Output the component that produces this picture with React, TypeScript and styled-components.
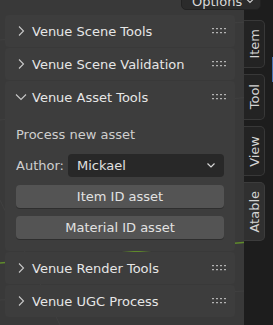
import { createGlobalStyle } from 'styled-components'
import styled from 'styled-components'

const GlobalStyle = createGlobalStyle`
  html, body {
    margin: 0;
    padding: 0;
    background: #393939;
  }
  * {
    box-sizing: border-box;
  }
`

const panels = [
  { title: 'Venue Scene Tools', open: false },
  { title: 'Venue Scene Validation', open: false },
  { title: 'Venue Asset Tools', open: true },
  { title: 'Venue Render Tools', open: false },
  { title: 'Venue UGC Process', open: false },
]

const tabs = [
  { label: 'Item', height: 48, active: false },
  { label: 'Tool', height: 46, active: false },
  { label: 'View', height: 50, active: false },
  { label: 'Atable', height: 59, active: true },
]

const Chevron = ({ open }: { open: boolean }) => (
  <ChevronSvg width="12" height="12" viewBox="0 0 12 12">
    {open ? (
      <path d="M1 3.5 L6 8.5 L11 3.5" fill="none" stroke="#c9c9c9" strokeWidth="1.1" />
    ) : (
      <path d="M4 1.5 L8.5 6 L4 10.5" fill="none" stroke="#c9c9c9" strokeWidth="1.1" />
    )}
  </ChevronSvg>
)

const DragHandle = () => (
  <svg width="14" height="6" viewBox="0 0 14 6">
    {[0, 4, 8, 12].map((x) =>
      [0, 4].map((y) => (
        <g key={`${x}-${y}`}>
          <rect x={x} y={y + 1} width="2" height="1" fill="#1e1e1e" />
          <rect x={x} y={y} width="2" height="1.4" fill="#b4b4b4" />
        </g>
      ))
    )}
  </svg>
)

const App = () => {
  return (
    <>
      <GlobalStyle />
      <Viewport>
        <GridLines width="273" height="325" viewBox="0 0 273 325">
          <path d="M0 40 L273 20" stroke="#404040" strokeWidth="1" />
          <path d="M0 120 L273 95" stroke="#404040" strokeWidth="1" />
          <path d="M0 200 L60 325" stroke="#404040" strokeWidth="1" />
          <path d="M0 300 L273 290" stroke="#414141" strokeWidth="1" />
          <path d="M0 263 L273 240" stroke="#5f8a2b" strokeWidth="1.5" />
        </GridLines>
        <OptionsButton>
          Options
          <svg width="8" height="6" viewBox="0 0 8 6">
            <path d="M1 1.5 L4 4.5 L7 1.5" fill="none" stroke="#d0d0d0" strokeWidth="1.1" />
          </svg>
        </OptionsButton>
        <Layout>
          <Sidebar>
            {panels.map((p) => (
              <Panel key={p.title}>
                <PanelHeader>
                  <Chevron open={p.open} />
                  <PanelTitle>{p.title}</PanelTitle>
                  <DragHandle />
                </PanelHeader>
                {p.open && (
                  <PanelBody>
                    <Label>Process new asset</Label>
                    <FieldRow>
                      <FieldLabel>Author:</FieldLabel>
                      <Dropdown>
                        <span>Mickael</span>
                        <svg width="10" height="7" viewBox="0 0 10 7">
                          <path d="M1.5 1.5 L5 5 L8.5 1.5" fill="none" stroke="#d6d6d6" strokeWidth="1.2" />
                        </svg>
                      </Dropdown>
                    </FieldRow>
                    <Button>Item ID asset</Button>
                    <Button>Material ID asset</Button>
                  </PanelBody>
                )}
              </Panel>
            ))}
          </Sidebar>
          <TabStrip>
            {tabs.map((t) => (
              <Tab key={t.label} $active={t.active} $height={t.height}>
                <TabText>{t.label}</TabText>
              </Tab>
            ))}
            <ScrollMark />
          </TabStrip>
        </Layout>
      </Viewport>
    </>
  )
}

export default App

const Viewport = styled.div`
  position: relative;
  width: 273px;
  height: 325px;
  overflow: hidden;
  background: #393939;
  font-family: 'DejaVu Sans', 'Liberation Sans', sans-serif;
  font-size: 13px;
  color: #e4e4e4;
`

const GridLines = styled.svg`
  position: absolute;
  inset: 0;
`

const OptionsButton = styled.div`
  position: absolute;
  top: -8px;
  left: 181px;
  width: 80px;
  height: 18px;
  z-index: 2;
  display: flex;
  align-items: center;
  justify-content: space-between;
  padding: 0 6px 0 10px;
  background: #2b2b2b;
  border: 1px solid #222;
  border-radius: 5px;
  color: #d8d8d8;
`

const Layout = styled.div`
  position: relative;
  display: flex;
  height: 100%;
`

const Sidebar = styled.div`
  width: 244px;
  padding: 15px 9px 0 5px;
  display: flex;
  flex-direction: column;
  gap: 1px;
`

const Panel = styled.div`
  background: #3d3d3d;
  border-radius: 4px;
`

const PanelHeader = styled.div`
  height: 32px;
  display: flex;
  align-items: center;
  padding: 0 9px 0 10px;
`

const ChevronSvg = styled.svg`
  flex: none;
  margin-right: 5px;
`

const PanelTitle = styled.div`
  flex: 1;
  color: #e6e6e6;
  white-space: nowrap;
`

const PanelBody = styled.div`
  padding: 12px 11px 12px 11px;
  display: flex;
  flex-direction: column;
  gap: 8px;
`

const Label = styled.div`
  height: 20px;
  line-height: 20px;
  color: #cfcfcf;
  margin-bottom: 1px;
`

const FieldRow = styled.div`
  display: flex;
  align-items: center;
  gap: 5px;
`

const FieldLabel = styled.div`
  width: 47px;
  color: #cfcfcf;
  white-space: nowrap;
`

const Dropdown = styled.div`
  flex: 1;
  height: 23px;
  display: flex;
  align-items: center;
  justify-content: space-between;
  padding: 0 8px 0 9px;
  background: #282828;
  border-radius: 4px;
  color: #e0e0e0;
`

const Button = styled.div`
  height: 23px;
  display: flex;
  align-items: center;
  justify-content: center;
  background: #545454;
  border-radius: 4px;
  box-shadow: 0 1px 0 #2e2e2e;
  color: #e2e2e2;
`

const TabStrip = styled.div`
  position: relative;
  width: 29px;
  background: #1d1d1d;
  padding-top: 20px;
  display: flex;
  flex-direction: column;
  gap: 6px;
`

const Tab = styled.div<{ $active: boolean; $height: number }>`
  width: 21px;
  height: ${({ $height }) => $height}px;
  background: ${({ $active }) => ($active ? '#303030' : '#232323')};
  border: 1px solid ${({ $active }) => ($active ? '#3c3c3c' : '#383838')};
  border-left: none;
  border-radius: 0 5px 5px 0;
  display: flex;
  align-items: center;
  justify-content: center;
`

const TabText = styled.div`
  writing-mode: vertical-rl;
  transform: rotate(180deg);
  color: #d4d4d4;
  white-space: nowrap;
`

const ScrollMark = styled.div`
  position: absolute;
  right: 0;
  top: 57px;
  width: 1px;
  height: 25px;
  background: #4772b3;
`
